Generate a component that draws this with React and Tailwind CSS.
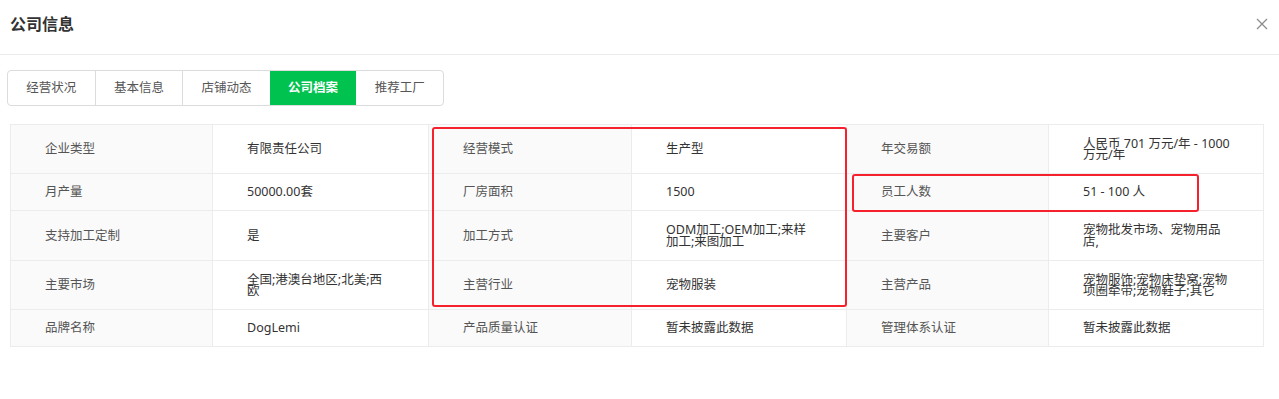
import { useState } from 'react';

const rows = [
  { h: 'h-[49px]', cells: [['企业类型', '有限责任公司'], ['经营模式', '生产型'], ['年交易额', '人民币 701 万元/年 - 1000 万元/年']] },
  { h: 'h-[37px]', cells: [['月产量', '50000.00套'], ['厂房面积', '1500'], ['员工人数', '51 - 100 人']] },
  { h: 'h-[50px]', cells: [['支持加工定制', '是'], ['加工方式', 'ODM加工;OEM加工;来样加工;来图加工'], ['主要客户', '宠物批发市场、宠物用品店,']] },
  { h: 'h-[49px]', cells: [['主要市场', '全国;港澳台地区;北美;西欧'], ['主营行业', '宠物服装'], ['主营产品', '宠物服饰;宠物床垫窝;宠物项圈牵带;宠物鞋子;其它']] },
  { h: 'h-[37px]', cells: [['品牌名称', 'DogLemi'], ['产品质量认证', '暂未披露此数据'], ['管理体系认证', '暂未披露此数据']] },
];

const tabs = ['经营状况', '基本信息', '店铺动态', '公司档案', '推荐工厂'];

// right padding of the value cell in each column group
const valuePad = ['pr-[37px]', 'pr-[34px]', 'pr-[32px]'];

export default function App() {
  const [active, setActive] = useState(3);

  return (
    <div className="w-[1279px] h-[399px] bg-white overflow-hidden" style={{ fontFamily: '"Noto Sans", "Noto Sans CJK SC", sans-serif' }}>
      <div className="h-[54px] flex items-center justify-between pl-[10px] pr-[11px] border-b border-[#ebebeb] box-content">
        <div className="text-[16px] font-bold text-[#333] leading-none mb-[6px]">公司信息</div>
        <svg width="12" height="12" viewBox="0 0 12 12" className="mb-[6px]">
          <path d="M1 1 L11 11 M11 1 L1 11" stroke="#8a8a8a" strokeWidth="1.2" />
        </svg>
      </div>

      <div className="mt-[15px] ml-[7px] flex w-[437px] h-[36px] border border-[#dcdcdc] rounded-[4px] overflow-hidden">
        {tabs.map((tab, i) => (
          <button
            key={`tab-${i}`}
            onClick={() => setActive(i)}
            className={`flex-1 flex items-center justify-center text-[12.5px] ${i > 0 && i !== active && i - 1 !== active ? 'border-l border-[#dcdcdc]' : ''} ${i === active ? 'bg-[#00c24e] text-white font-bold -my-px' : 'text-[#555]'}`}
          >
            {tab}
          </button>
        ))}
      </div>

      <div className="relative mt-[18px] ml-[10px] w-[1253px]">
        <table className="w-full table-fixed border-collapse text-[12.5px]">
          <colgroup>
            <col className="w-[202px]" />
            <col className="w-[216px]" />
            <col className="w-[203px]" />
            <col className="w-[215px]" />
            <col className="w-[202px]" />
            <col className="w-[215px]" />
          </colgroup>
          <tbody>
            {rows.map((row, i) => (
              <tr key={`row-${i}`} className={row.h}>
                {row.cells.map(([label, value], j) => (
                  [
                    <td key={`l-${j}`} className="bg-[#fafafa] border border-[#ececec] pl-[34px] pr-[10px] text-[#555] leading-[11.5px] align-middle">{label}</td>,
                    <td key={`v-${j}`} className={`bg-white border border-[#ececec] pl-[34px] ${valuePad[j]} text-[#333] leading-[11.5px] align-middle`}>{value}</td>,
                  ]
                ))}
              </tr>
            ))}
          </tbody>
        </table>
        <div className="absolute left-[422px] top-[3px] w-[415px] h-[180px] border-2 border-[#f5222d] rounded-[3px] pointer-events-none" />
        <div className="absolute left-[842px] top-[50px] w-[347px] h-[38px] border-2 border-[#f5222d] rounded-[3px] pointer-events-none" />
      </div>
    </div>
  );
}
